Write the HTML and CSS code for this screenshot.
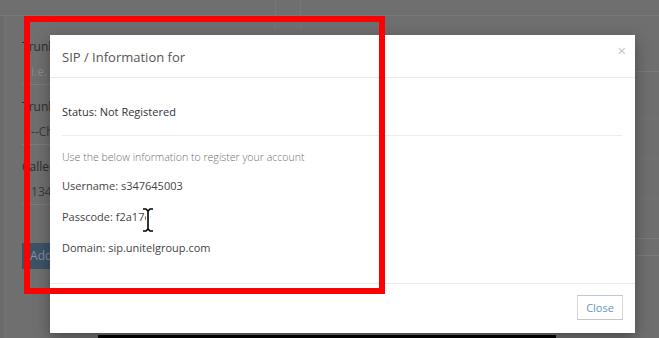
FILE: index.html
```html
<!DOCTYPE html>
<html lang="en">
<head>
    <meta charset="UTF-8">
    <title>SIP Information</title>
    <link rel="stylesheet" href="styles.css">
</head>
<body>
    <div class="page">
        <div class="topbar">
            <div class="tab"></div>
            <div class="tab"></div>
        </div>
        <div class="content">
            <div class="sidebar"></div>
            <form class="trunk-form">
                <div class="form-group">
                    <label>Trunk</label>
                    <div class="field placeholder">i.e.</div>
                </div>
                <div class="form-group">
                    <label>Trunk</label>
                    <div class="field">--Ch</div>
                </div>
                <div class="form-group">
                    <label>Caller</label>
                    <div class="field">134</div>
                </div>
                <div class="form-button">Add</div>
            </form>
            <div class="details">
                <div class="detail-head"></div>
                <div class="detail-row top">Listen calls</div>
                <div class="detail-row">Caller ID:</div>
                <div class="detail-row">Sender ID:</div>
                <div class="detail-foot"></div>
            </div>
        </div>
        <div class="player-bar"></div>
    </div>

    <div class="modal">
        <div class="modal-header">
            <h4 class="modal-title">SIP / Information for</h4>
            <span class="modal-close">&times;</span>
        </div>
        <div class="modal-body">
            <p class="status">Status: Not Registered</p>
            <hr>
            <p class="hint">Use the below information to register your account</p>
            <p class="info first">Username: s347645003</p>
            <p class="info">Passcode: f2a17e</p>
            <p class="info">Domain: sip.unitelgroup.com</p>
        </div>
        <div class="modal-footer">
            <button type="button" class="btn-close">Close</button>
        </div>
    </div>

    <div class="highlight"></div>

    <svg class="text-cursor" width="14" height="26" viewBox="0 0 14 26">
        <path d="M2 2h3l2 2 2-2h3M7 4v18M2 24h3l2-2 2 2h3" fill="none" stroke="#fff" stroke-width="4" stroke-linecap="round"/>
        <path d="M2 2h3l2 2 2-2h3M7 4v18M2 24h3l2-2 2 2h3" fill="none" stroke="#000" stroke-width="1.6"/>
    </svg>
</body>
</html>
```

FILE: styles.css
```css
body {
    margin: 0;
    font-family: "Open Sans", "Liberation Sans", Arial, sans-serif;
    font-size: 11px;
    background: #6f6f6f;
    overflow: hidden;
}

/* page behind the dimmed backdrop */
.page {
    height: 338px;
    background: #6f6f6f;
    color: #2e2e2e;
    position: relative;
    overflow: hidden;
}

.topbar {
    height: 15px;
    border-bottom: 1px solid #777;
    display: flex;
    padding-left: 275px;
}

.tab {
    width: 24px;
    height: 30px;
    border-left: 1px solid #767676;
}

.content {
    display: flex;
}

.sidebar {
    width: 8px;
    height: 322px;
    background: #6b6b6b;
    border-right: 1px solid #747474;
}

.trunk-form {
    width: 300px;
    padding: 21px 0 0 17px;
    display: flex;
    flex-direction: column;
    gap: 12px;
}

.form-group {
    display: flex;
    flex-direction: column;
    gap: 3px;
}

.form-group label {
    line-height: 20px;
    font-size: 12px;
    color: #2e2e2e;
}

.field {
    height: 24px;
    line-height: 24px;
    padding-left: 9px;
    font-size: 12px;
    border-bottom: 1px solid #7c7c7c;
    color: #3a3a3a;
}

.field.placeholder {
    color: #8a8a8a;
}

.form-button {
    margin-top: 26px;
    width: 90px;
    height: 26px;
    line-height: 26px;
    padding-left: 8px;
    font-size: 12px;
    background: #3e5267;
    color: #8393a4;
}

.details {
    margin-left: 285px;
    width: 200px;
    flex-shrink: 0;
}

.detail-head {
    height: 55px;
    border-bottom: 1px solid #7a7a7a;
}

.detail-row {
    height: 39px;
    line-height: 30px;
    font-size: 12px;
    border-top: 1px solid #737373;
    color: #2e2e2e;
}

.detail-row.top {
    margin-top: 46px;
}

.detail-foot {
    height: 16px;
    border-top: 1px solid #7b7b7b;
    border-bottom: 1px solid #7b7b7b;
}

.player-bar {
    position: absolute;
    left: 98px;
    bottom: 0;
    width: 458px;
    height: 3px;
    background: #000;
}

/* modal dialog */
.modal {
    position: absolute;
    left: 50px;
    top: 35px;
    width: 585px;
    height: 298px;
    background: #fff;
    box-shadow: 0 5px 15px rgba(0,0,0,0.35);
    display: flex;
    flex-direction: column;
    color: #444;
}

.modal-header {
    height: 42px;
    padding: 0 12px;
    border-bottom: 1px solid #e9e9e9;
    display: flex;
    align-items: center;
    justify-content: space-between;
}

.modal-title {
    margin: 2px 0 0;
    font-size: 13px;
    font-weight: 400;
    color: #555;
}

.modal-close {
    font-size: 15px;
    color: #c4c4c4;
    margin-top: -12px;
    margin-right: -3px;
}

.modal-body {
    height: 205px;
    padding: 0 13px 0 12px;
}

.modal-body p {
    margin: 0;
    line-height: 20px;
}

.status {
    margin-top: 24px !important;
    color: #333;
}

hr {
    border: none;
    border-top: 1px solid #ececec;
    margin: 13px 0 11px;
}

.hint {
    font-size: 10.6px;
    color: #6f6f6f;
    font-weight: 300;
}

.info {
    margin-top: 11px !important;
    color: #444;
}

.info.first {
    margin-top: 9px !important;
}

.modal-footer {
    flex: 1;
    border-top: 1px solid #e9e9e9;
    display: flex;
    justify-content: flex-end;
    align-items: flex-start;
    padding: 11px 12px 0;
}

.btn-close {
    font-family: inherit;
    font-size: 11px;
    width: 46px;
    height: 25px;
    padding: 0;
    background: #fff;
    color: #5f95c8;
    border: 1px solid #d6d6d6;
    border-top-color: #b9c9d8;
    border-bottom-color: #c6c6c6;
}

/* red annotation box */
.highlight {
    position: absolute;
    left: 24px;
    top: 16px;
    width: 361px;
    height: 278px;
    box-sizing: border-box;
    border: 6px solid #ff0000;
}

.text-cursor {
    position: absolute;
    left: 141px;
    top: 207px;
}
```
